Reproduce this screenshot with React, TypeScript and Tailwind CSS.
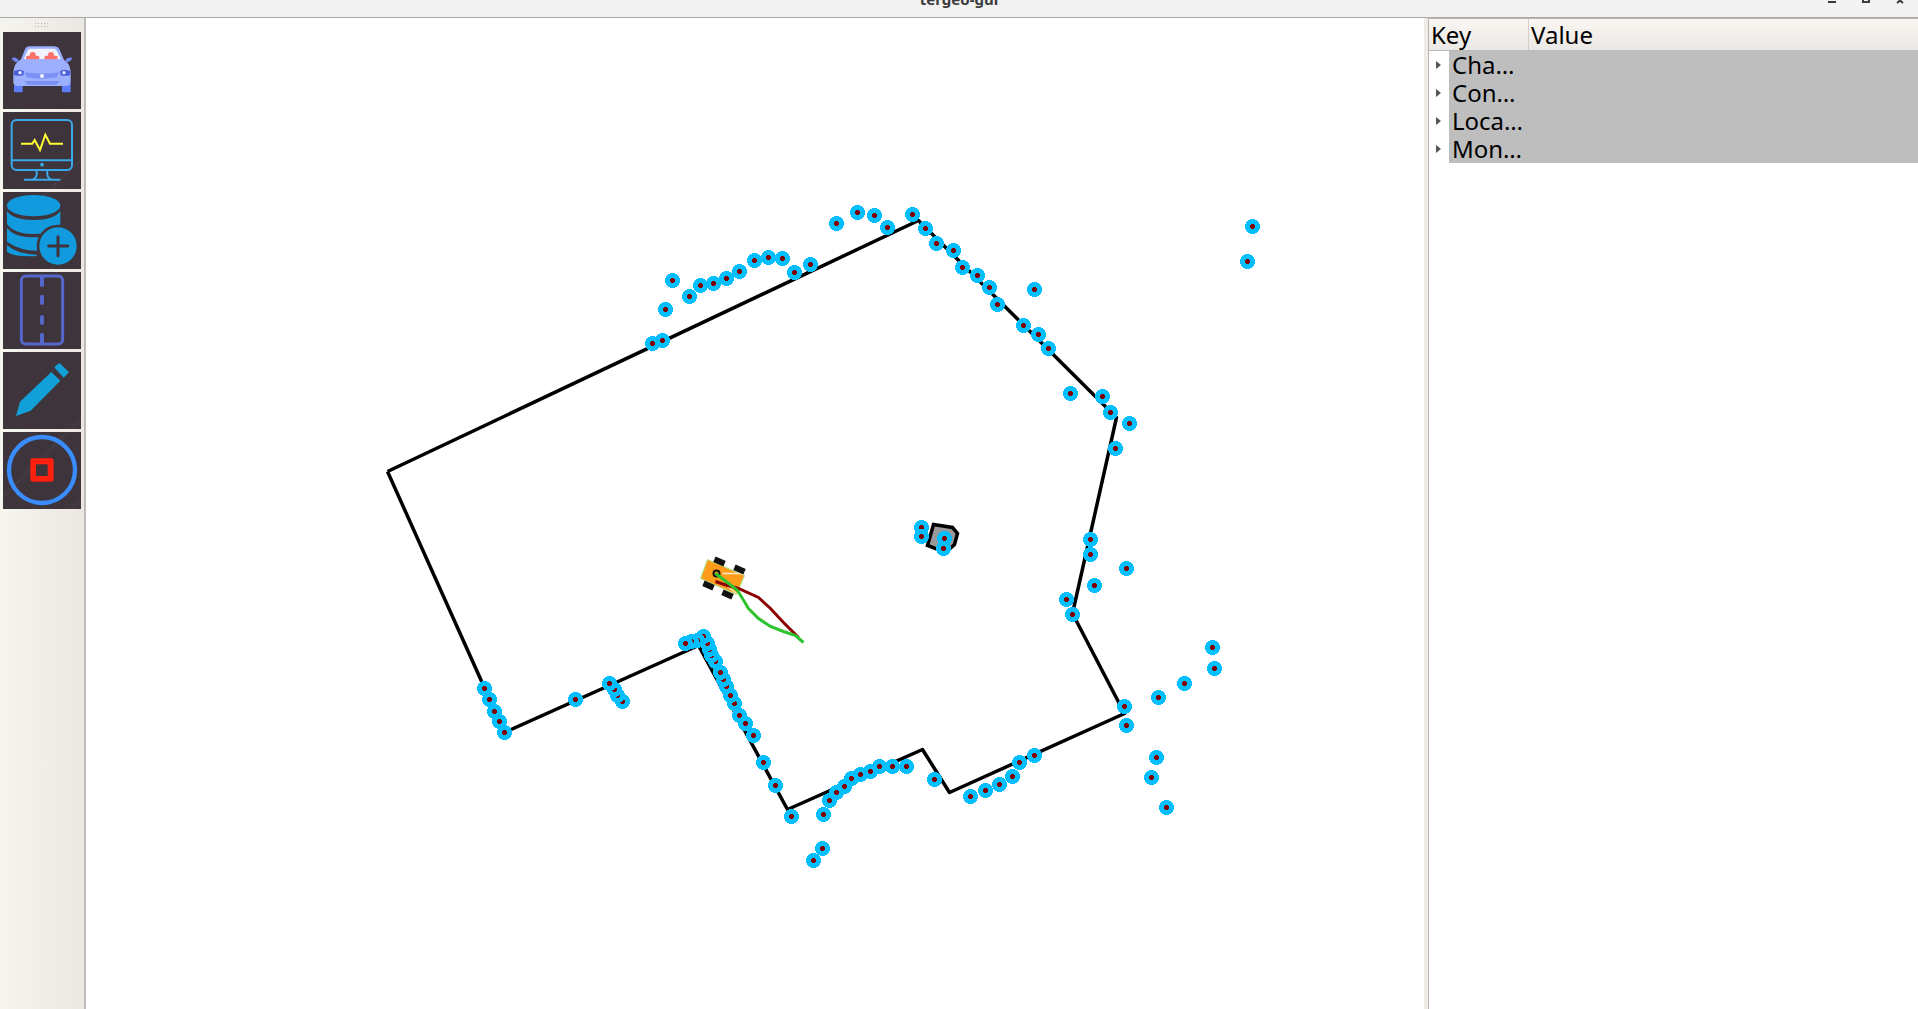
// Map data is in page pixels; the svg viewBox is offset to match.
const WALL = '387,471 918,220 1116,417 1072,613 1124,713 949,792 922,749 787,809 698,645 504,732 387,471';

const OBSTACLE = '933,524 952,527 957,533 954,544 945,552 927,545';

const POINTS: [number, number][] = [
  [652, 343], [662, 340], [665, 309], [672, 280], [689, 296], [700, 285], [713, 283], [726, 278],
  [739, 271], [754, 260], [768, 257], [782, 258], [794, 272], [810, 264], [836, 223], [857, 212],
  [874, 215], [887, 227], [912, 214], [925, 228], [936, 243], [953, 250], [962, 267], [977, 275],
  [989, 287], [997, 304], [1034, 289], [1023, 325], [1038, 334], [1048, 348], [1070, 393], [1102, 396],
  [1110, 412], [1129, 423], [1115, 448], [1252, 226], [1247, 261], [1090, 539], [1090, 554], [1126, 568],
  [1094, 585], [1066, 599], [1072, 614], [1124, 706], [1126, 725], [1212, 647], [1214, 668], [1184, 683],
  [1158, 697], [1156, 757], [1151, 777], [1166, 807], [1034, 755], [1019, 762], [1012, 776], [999, 784],
  [985, 790], [970, 796], [934, 779], [906, 766], [892, 766], [879, 766], [870, 771], [860, 774],
  [851, 778], [844, 786], [836, 792], [829, 800], [823, 814], [822, 848], [813, 860], [791, 816],
  [775, 785], [763, 762], [753, 735], [745, 723], [739, 715], [734, 703], [730, 695], [726, 686],
  [723, 679], [720, 672], [715, 661], [711, 655], [709, 649], [707, 643], [703, 636], [697, 640],
  [691, 641], [685, 643], [622, 701], [617, 695], [614, 689], [609, 683], [575, 699], [504, 732],
  [499, 721], [494, 711], [489, 699], [484, 688], [921, 527], [921, 536], [944, 538], [943, 548],
];

const ROWS = ['Cha…', 'Con…', 'Loca…', 'Mon…'];

function Streaks() {
  return (
    <g stroke="#4a4047" strokeWidth="12" opacity="0.45">
      <path d="M-40 1000 L800 160" />
      <path d="M-40 760 L800 -80" />
      <path d="M60 1000 L900 160" />
      <path d="M200 1000 L900 300" />
    </g>
  );
}

function Tile({ y, children }: { y: number; children: React.ReactNode }) {
  return (
    <svg viewBox={`9 ${y} 234 231`} className="w-[78px] h-[77px] shrink-0 bg-[#3e343b]">
      <Streaks />
      {children}
    </svg>
  );
}

function Seat({ x }: { x: number }) {
  return (
    <g fill="#ff6f6b">
      <circle cx={x} cy="165" r="9" />
      <rect x={x - 20} y="167" width="40" height="12" rx="5" />
    </g>
  );
}

function CarIcon() {
  return (
    <Tile y={96}>
      <path d="M62 180 L75 148 Q78 139 90 139 H162 Q174 139 178 148 L192 180 Z" fill="#9aaeff" />
      <path d="M71 178 L83 151 Q85 146 92 146 H160 Q167 146 169 151 L183 178 Z" fill="#f1f3ff" />
      <Seat x={98} />
      <Seat x={153} />
      <path d="M35 174 Q46 170 56 180 L52 187 Q40 186 35 174 Z" fill="#6f88f5" />
      <path d="M217 174 Q206 170 196 180 L200 187 Q212 186 217 174 Z" fill="#6f88f5" />
      <rect x="42" y="250" width="26" height="27" rx="3" fill="#5f7dff" />
      <rect x="186" y="250" width="26" height="27" rx="3" fill="#5f7dff" />
      <path d="M40 215 Q42 188 64 178 H188 Q210 188 212 215 V246 Q212 258 198 258 H54 Q40 258 40 246 Z" fill="#9db0ff" />
      <path d="M41 214 Q58 204 72 214 L70 226 Q52 230 41 224 Z" fill="#4a5fd8" />
      <path d="M211 214 Q194 204 180 214 L182 226 Q200 230 211 224 Z" fill="#4a5fd8" />
      <circle cx="60" cy="218" r="5" fill="#e8ecff" />
      <circle cx="192" cy="218" r="5" fill="#e8ecff" />
      <path d="M74 217 Q126 224 178 217 L170 232 Q126 240 82 232 Z" fill="#7a90f2" />
      <circle cx="126" cy="228" r="6" fill="#f2f4ff" />
      <path d="M74 243 H178 L170 254 H82 Z" fill="#7a90f2" />
    </Tile>
  );
}

function MonitorIcon() {
  return (
    <Tile y={336}>
      <g fill="none" stroke="#39a9ec" strokeWidth="6">
        <rect x="35" y="360" width="181" height="150" rx="14" />
        <path d="M35 481 H216" />
        <path d="M110 512 Q113 534 98 539 M142 512 Q139 534 154 539" />
        <path d="M72 539 H181" />
      </g>
      <circle cx="126" cy="494" r="5.5" fill="#39a9ec" />
      <path d="M63 431 H97 L104 420 L120 450 L136 404 L150 431 H189" fill="none" stroke="#ffff33" strokeWidth="6" />
    </Tile>
  );
}

function DatabaseIcon() {
  return (
    <Tile y={576}>
      <g fill="#129ade">
        <ellipse cx="101" cy="617" rx="80" ry="32" />
        <path d="M21 633 Q40 660 101 660 Q162 660 181 633 V672 Q160 702 101 702 Q42 702 21 672 Z" />
        <path d="M21 683 Q42 712 101 712 Q130 712 150 706 L120 725 L112 752 Q60 752 21 725 Z" />
        <path d="M21 735 Q50 762 108 764 L112 768 Q40 772 21 755 Z" />
      </g>
      <circle cx="174" cy="738" r="64" fill="#3e343b" />
      <circle cx="174" cy="738" r="56" fill="#129ade" />
      <path d="M146 738 H203 M174 710 V767" stroke="#3e343b" strokeWidth="9" strokeLinecap="round" />
    </Tile>
  );
}

function RoadIcon() {
  return (
    <Tile y={36}>
      <rect x="64" y="48" width="124" height="204" rx="14" fill="none" stroke="#5566cc" strokeWidth="9" />
      <g stroke="#5566cc" strokeWidth="12" strokeLinecap="round">
        <path d="M126 50 V76 M126 110 V129 M126 171 V189 M126 224 V250" />
      </g>
    </Tile>
  );
}

function PencilIcon() {
  return (
    <Tile y={276}>
      <path d="M154 336 L181 362 L92 452 L48 468 L60 425 Z" fill="#12a0d8" />
      <path d="M167 322 L178 313 L203 337 L191 349 Z" fill="#12a0d8" stroke="#12a0d8" strokeWidth="6" strokeLinejoin="round" />
    </Tile>
  );
}

function StopIcon() {
  return (
    <Tile y={516}>
      <circle cx="126" cy="630" r="99" fill="none" stroke="#3a8dff" strokeWidth="13" />
      <rect x="91" y="595" width="70" height="70" rx="7" fill="#ff2010" />
      <rect x="108" y="613" width="35" height="35" fill="#3e343b" />
    </Tile>
  );
}

function MapView() {
  return (
    <svg viewBox="86 18 1338 991" className="flex-1 h-full min-w-0 bg-white">
      <g transform="translate(0.5 0.5)">
        <polyline points={WALL} fill="none" stroke="#000" strokeWidth="3.5" strokeLinejoin="round" />
        <polygon points={OBSTACLE} fill="#999" stroke="#000" strokeWidth="3.5" />

        {/* robot */}
        <polygon points="707,559 744,575 736,594 700,578" fill="#ff9c1c" stroke="#a6e88a" strokeWidth="1" />
        <path d="M722 573 H743 M722 582 L736 593" stroke="#ffe9c4" strokeWidth="1.5" />
        <g fill="#111">
          <rect x="-5.5" y="-3" width="11" height="6" transform="translate(719 561) rotate(23)" />
          <rect x="-5.5" y="-3" width="11" height="6" transform="translate(739 569) rotate(23)" />
          <rect x="-5.5" y="-3" width="11" height="6" transform="translate(708 585) rotate(23)" />
          <rect x="-5.5" y="-3" width="11" height="6" transform="translate(727 594) rotate(23)" />
        </g>
        <circle cx="716" cy="573" r="3" fill="none" stroke="#111" strokeWidth="2" />

        {/* planned paths */}
        <polyline
          points="715,581 727,585 738,588 758,597 770,608 783,622 798,637"
          fill="none"
          stroke="#8b0000"
          strokeWidth="3"
        />
        <polyline
          points="715,573 727,582 737,590 742,598 748,608 758,618 770,626 783,631 795,635 803,642"
          fill="none"
          stroke="#2ec42e"
          strokeWidth="3"
        />

        {POINTS.map(([x, y]) => (
          <g key={`${x}-${y}`}>
            <circle cx={x} cy={y} r="7.5" fill="#00bfff" shapeRendering="crispEdges" />
            <circle cx={x} cy={y} r="2.5" fill="#800000" shapeRendering="crispEdges" />
          </g>
        ))}
      </g>
    </svg>
  );
}

export default function App() {
  return (
    <div className="w-screen h-screen overflow-hidden flex flex-col bg-white font-['Noto_Sans',sans-serif] text-black">
      <div className="h-[18px] shrink-0 grid grid-cols-[1fr_auto_1fr] bg-[#f2f2f2] border-b border-[#a9a9a3] overflow-hidden">
        <div />
        <span className="font-bold text-[15px] leading-[20px] -mt-[11px] text-[#3c3c3c]">tergeo-gui</span>
        <div className="flex justify-end pr-[14px]">
          <svg viewBox="0 0 76 5" className="w-[76px] h-[5px]" fill="none" stroke="#3c3c3c" strokeWidth="2">
            <path d="M0 2 H8" />
            <rect x="35" y="-4" width="6" height="6" />
            <path d="M69 -2 L75 3 M75 -2 L69 3" />
          </svg>
        </div>
      </div>

      <div className="flex-1 min-h-0 flex">
        <div className="w-[86px] shrink-0 border-r-2 border-[#bdbcb8] bg-gradient-to-r from-[#f6f4ef] to-[#ebe8e3] flex flex-col items-start pl-[3px]">
          <div className="h-[14px] w-[78px] flex flex-col items-center justify-center gap-[1px]">
            <div className="w-[16px] h-[6px] bg-[radial-gradient(#b5b3ae_1px,transparent_1px)] bg-[length:3px_3px]" />
          </div>
          <div className="flex flex-col gap-[3px]">
            <CarIcon />
            <MonitorIcon />
            <DatabaseIcon />
            <RoadIcon />
            <PencilIcon />
            <StopIcon />
          </div>
        </div>

        <MapView />

        <div className="w-[494px] shrink-0 flex">
          <div className="w-[4px] bg-[#efebe7]" />
          <div className="flex-1 border-l border-[#b9b7b2] flex flex-col">
            <div className="h-[33px] flex text-[24px] leading-[32px] border-b border-t border-[#bdbab5] bg-gradient-to-b from-[#faf6f2] to-[#ebe9e5]">
              <div className="w-[100px] pl-[2px] border-r border-[#d2d0cb]">Key</div>
              <div className="flex-1 pl-[2px]">Value</div>
            </div>
            <div className="flex flex-col">
              {ROWS.map((row) => (
                <div key={row} className="h-[28px] flex">
                  <div className="w-[20px] flex items-center pl-[7px]">
                    <div className="w-0 h-0 border-y-[4px] border-y-transparent border-l-[5px] border-l-[#555]" />
                  </div>
                  <div className="flex-1 bg-[#bebebe] pl-[3px] text-[24px] leading-[28px]">{row}</div>
                </div>
              ))}
            </div>
          </div>
        </div>
      </div>
    </div>
  );
}
